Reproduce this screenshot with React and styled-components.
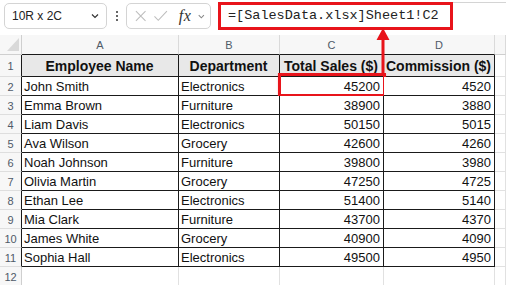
import React from "react";
import styled, { createGlobalStyle } from "styled-components";

const GlobalStyle = createGlobalStyle`
  html, body {
    margin: 0;
    padding: 0;
    background: #ffffff;
  }
  body {
    font-family: "Liberation Sans", Arial, sans-serif;
    overflow: hidden;
  }
  * { box-sizing: border-box; }
`;

const RED = "#e8141b";

const Frame = styled.div`
  position: relative;
  width: 506px;
  height: 285px;
  overflow: hidden;
  background: #ffffff;
`;

const Toolbar = styled.div`
  height: 35px;
  display: flex;
  align-items: flex-start;
  padding: 3px 0 0 4px;
`;

const NameBox = styled.div`
  width: 103px;
  height: 26px;
  border: 1px solid #d4d4d4;
  border-radius: 5px;
  display: flex;
  align-items: center;
  justify-content: space-between;
  padding: 0 6px 0 7px;
  font-size: 12px;
  color: #222;
`;

const Dots = styled.div`
  width: 20px;
  height: 26px;
  display: flex;
  flex-direction: column;
  align-items: center;
  justify-content: center;
  gap: 2px;

  > span {
    width: 2px;
    height: 2px;
    border-radius: 50%;
    background: #333;
  }
`;

const FxGroup = styled.div`
  width: 85px;
  height: 26px;
  border: 1px solid #d4d4d4;
  border-radius: 5px;
  display: flex;
  align-items: center;
  padding: 0 4px 0 7px;
  gap: 6px;
  margin-left: -1px;
`;

const Fx = styled.span`
  font-family: "Liberation Serif", "Times New Roman", serif;
  font-style: italic;
  font-size: 16px;
  color: #333;
  margin-left: 4px;
  letter-spacing: 0.5px;
`;

const FormulaBar = styled.div`
  position: relative;
  flex: 1;
  height: 26px;
  margin-left: 7px;
  margin-top: -1px;
  border-top: 1px solid #d4d4d4;
  display: flex;
  align-items: center;
  padding-left: 10px;
  font-family: "Liberation Mono", "Courier New", monospace;
  font-size: 13.5px;
  color: #222;
`;

const Callout = styled.div`
  position: absolute;
  left: 0;
  top: -1px;
  width: 235px;
  height: 28px;
  border: 3px solid ${RED};
`;

const Sheet = styled.div`
  display: grid;
  grid-template-columns: 22px 157px 101px 104px 111px 1fr;
  grid-template-rows: 20px 22px repeat(11, 19px);
`;

const Corner = styled.div`
  position: relative;
  background: #f7f7f7;
  border-right: 1px solid #cfcfcf;
  border-bottom: 1px solid #cfcfcf;

  &::after {
    content: "";
    position: absolute;
    left: 7px;
    bottom: 3px;
    border-left: 12px solid transparent;
    border-bottom: 13px solid #d9d9d9;
  }
`;

const ColHead = styled.div`
  background: #f7f7f7;
  border-right: 1px solid #dadada;
  border-bottom: 1px solid ${(p) => (p.$edge ? "#1a1a1a" : "#cfcfcf")};
  display: flex;
  align-items: center;
  justify-content: center;
  font-size: 11px;
  color: #4f5a68;
`;

const RowHead = styled.div`
  background: #f7f7f7;
  border-right: 1px solid ${(p) => (p.$edge ? "#1a1a1a" : "#cfcfcf")};
  border-bottom: 1px solid #dedede;
  display: flex;
  align-items: center;
  justify-content: center;
  font-size: 11px;
  color: #4f5a68;
  padding-top: 1px;
`;

const Cell = styled.div`
  position: relative;
  border-right: 1px solid ${(p) => (p.$inTable ? "#1a1a1a" : "#e1e1e1")};
  border-bottom: 1px solid ${(p) => (p.$inTable ? "#1a1a1a" : "#e1e1e1")};
  background: ${(p) => (p.$head ? "#e8e8e8" : "#ffffff")};
  display: flex;
  align-items: center;
  justify-content: ${(p) => (p.$head ? "center" : p.$num ? "flex-end" : "flex-start")};
  padding: 1px 3px 0 2px;
  font-size: ${(p) => (p.$head ? "14px" : "13px")};
  font-weight: ${(p) => (p.$head ? "bold" : "normal")};
  color: #111;
  white-space: nowrap;
`;

const CellMark = styled.div`
  position: absolute;
  left: -2px;
  top: -4px;
  right: -3px;
  bottom: -2px;
  border: 3px solid ${RED};
  box-shadow: 0 1px 2px rgba(232, 20, 27, 0.25);
`;

const Arrow = styled.svg`
  position: absolute;
  left: 375px;
  top: 27px;
`;

const rows = [
  ["John Smith", "Electronics", 45200, 4520],
  ["Emma Brown", "Furniture", 38900, 3880],
  ["Liam Davis", "Electronics", 50150, 5015],
  ["Ava Wilson", "Grocery", 42600, 4260],
  ["Noah Johnson", "Furniture", 39800, 3980],
  ["Olivia Martin", "Grocery", 47250, 4725],
  ["Ethan Lee", "Electronics", 51400, 5140],
  ["Mia Clark", "Furniture", 43700, 4370],
  ["James White", "Grocery", 40900, 4090],
  ["Sophia Hall", "Electronics", 49500, 4950],
];

const headers = ["Employee Name", "Department", "Total Sales ($)", "Commission ($)"];

const Chevron = ({ color = "#333", size = 10 }) => (
  <svg width={size} height={size} viewBox="0 0 10 10">
    <path d="M2 3.5 L5 6.5 L8 3.5" fill="none" stroke={color} strokeWidth="1.2" />
  </svg>
);

export default function App() {
  return (
    <Frame>
      <GlobalStyle />
      <Toolbar>
        <NameBox>
          <span>10R x 2C</span>
          <Chevron />
        </NameBox>
        <Dots>
          <span />
          <span />
          <span />
        </Dots>
        <FxGroup>
          <svg width="14" height="14" viewBox="0 0 14 14">
            <path d="M2 2 L12 12 M12 2 L2 12" stroke="#bdbdbd" strokeWidth="1.1" fill="none" />
          </svg>
          <svg width="16" height="14" viewBox="0 0 16 14">
            <path d="M1.5 7.5 L5.5 11.5 L14.5 2" stroke="#bdbdbd" strokeWidth="1.1" fill="none" />
          </svg>
          <Fx>fx</Fx>
          <Chevron color="#888" size={9} />
        </FxGroup>
        <FormulaBar>
          <Callout />
          <span>=[SalesData.xlsx]Sheet1!C2</span>
        </FormulaBar>
      </Toolbar>

      <Sheet>
        <Corner />
        {["A", "B", "C", "D"].map((c) => (
          <ColHead key={c} $edge>
            {c}
          </ColHead>
        ))}
        <ColHead />

        <RowHead $edge>1</RowHead>
        {headers.map((h) => (
          <Cell key={h} $head $inTable>
            {h}
          </Cell>
        ))}
        <Cell />

        {rows.map((r, i) => (
          <React.Fragment key={r[0]}>
            <RowHead $edge>{i + 2}</RowHead>
            <Cell $inTable>{r[0]}</Cell>
            <Cell $inTable>{r[1]}</Cell>
            <Cell $inTable $num>
              {r[2]}
              {i === 0 && <CellMark />}
            </Cell>
            <Cell $inTable $num>
              {r[3]}
            </Cell>
            <Cell />
          </React.Fragment>
        ))}

        <RowHead>12</RowHead>
        <Cell />
        <Cell />
        <Cell />
        <Cell />
        <Cell />
      </Sheet>

      <Arrow width="16" height="48" viewBox="0 0 16 48">
        <path d="M8 1 L14.5 13 L9.5 13 L9.5 48 L6.5 48 L6.5 13 L1.5 13 Z" fill={RED} />
      </Arrow>
    </Frame>
  );
}
